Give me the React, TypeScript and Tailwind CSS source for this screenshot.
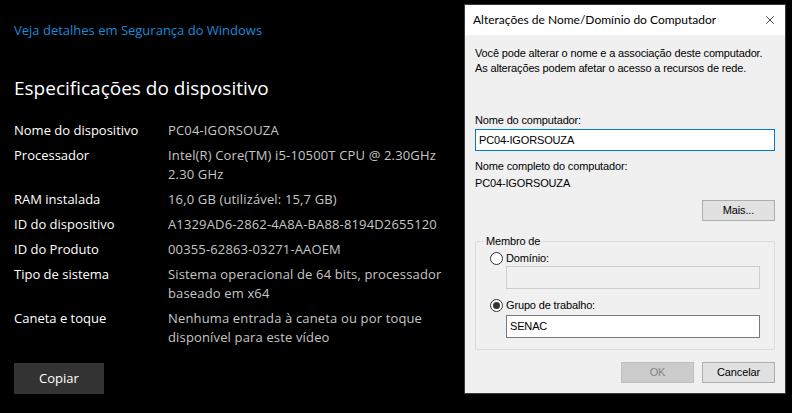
import { X } from 'lucide-react';

const specs: { label: string; value: string[] }[] = [
  { label: 'Nome do dispositivo', value: ['PC04-IGORSOUZA'] },
  { label: 'Processador', value: ['Intel(R) Core(TM) i5-10500T CPU @ 2.30GHz', '2.30 GHz'] },
  { label: 'RAM instalada', value: ['16,0 GB (utilizável: 15,7 GB)'] },
  { label: 'ID do dispositivo', value: ['A1329AD6-2862-4A8A-BA88-8194D2655120'] },
  { label: 'ID do Produto', value: ['00355-62863-03271-AAOEM'] },
  { label: 'Tipo de sistema', value: ['Sistema operacional de 64 bits, processador', 'baseado em x64'] },
  { label: 'Caneta e toque', value: ['Nenhuma entrada à caneta ou por toque', 'disponível para este vídeo'] },
];

function Radio({ checked }: { checked?: boolean }) {
  return (
    <span className="w-[13px] h-[13px] rounded-full border border-[#333] bg-white flex items-center justify-center shrink-0">
      {checked && <span className="w-[7px] h-[7px] rounded-full bg-[#333]" />}
    </span>
  );
}

export default function App() {
  return (
    <div className="w-[792px] h-[413px] bg-black flex overflow-hidden font-['Open_Sans',sans-serif]">
      {/* Settings page */}
      <div className="w-[464px] shrink-0 pl-[14px] pt-[21px]">
        <a className="block text-[13px] leading-[18px] text-[#1a8ad8]">Veja detalhes em Segurança do Windows</a>
        <h1 className="mt-[36px] text-[19px] leading-[26px] text-white">Especificações do dispositivo</h1>
        <div className="mt-[20px] flex flex-col gap-[7px] text-[13px] leading-[18px]">
          {specs.map((s) => (
            <div key={s.label} className="flex">
              <span className="w-[154px] shrink-0 text-white">{s.label}</span>
              <div className="text-[#c6c6c6] tracking-[0.15px]">
                {s.value.map((v, i) => (
                  <div key={v} className={i > 0 ? 'mt-[1px]' : ''}>{v}</div>
                ))}
              </div>
            </div>
          ))}
        </div>
        <button className="mt-[17px] w-[90px] h-[31px] bg-[#333333] text-white text-[13px]">Copiar</button>
      </div>

      {/* Dialog window */}
      <div className="mt-[4px] w-[322px] h-[390px] border border-[#3a3a3a] bg-[#f0f0f0] flex flex-col overflow-hidden">
        <div className="h-[30px] bg-white flex items-center justify-between pl-[8px] pr-[8px] shrink-0">
          <span className="text-[12px] text-black font-['Lato',sans-serif]">Alterações de Nome/Domínio do Computador</span>
          <X className="w-[14px] h-[14px] text-black" strokeWidth={1.2} />
        </div>
        <div className="flex flex-col px-[10px] pt-[11px] text-[11px] leading-[15px] tracking-[-0.15px] text-black font-['Liberation_Sans',Arial,sans-serif]">
          <p>Você pode alterar o nome e a associação deste computador.</p>
          <p>As alterações podem afetar o acesso a recursos de rede.</p>
          <p className="mt-[37px]">Nome do computador:</p>
          <div className="mt-[1px] h-[22px] border border-[#0078d7] bg-white flex items-center px-[3px]">PC04-IGORSOUZA</div>
          <p className="mt-[8px]">Nome completo do computador:</p>
          <p className="mt-[2px]">PC04-IGORSOUZA</p>
          <div className="mt-[9px] flex justify-end">
            <button className="w-[73px] h-[21px] border border-[#adadad] bg-[#e1e1e1]">Mais...</button>
          </div>
          <fieldset className="mt-[13px] border border-[#dcdcdc] rounded-[2px] pl-[14px] pr-[14px] h-[116px]">
            <legend className="ml-[-6px] px-[2px]">Membro de</legend>
            <div className="flex items-center gap-[3px] mt-[2px]">
              <Radio />
              <span>Domínio:</span>
            </div>
            <div className="ml-[16px] h-[23px] border border-[#cccccc] bg-[#f0f0f0]" />
            <div className="flex items-center gap-[3px] mt-[9px]">
              <Radio checked />
              <span>Grupo de trabalho:</span>
            </div>
            <div className="ml-[16px] mt-[2px] h-[23px] border border-[#7a7a7a] bg-white flex items-center px-[3px]">SENAC</div>
          </fieldset>
          <div className="mt-[12px] flex justify-end gap-[8px]">
            <button className="w-[73px] h-[21px] border border-[#bfbfbf] bg-[#cccccc] text-[#838383]">OK</button>
            <button className="w-[73px] h-[21px] border border-[#adadad] bg-[#e1e1e1]">Cancelar</button>
          </div>
        </div>
      </div>
    </div>
  );
}
